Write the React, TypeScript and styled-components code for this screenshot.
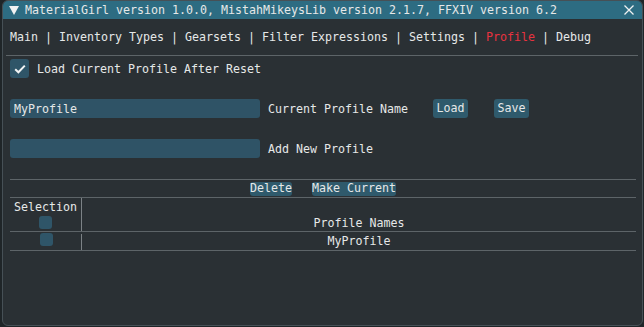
import React, { useState } from 'react';
import styled, { createGlobalStyle } from 'styled-components';

const GlobalStyle = createGlobalStyle`
  html, body {
    margin: 0;
    padding: 0;
    background: #1f2528;
    width: 644px;
    height: 327px;
    overflow: hidden;
  }
`;

const Window = styled.div`
  box-sizing: border-box;
  width: 641px;
  height: 326px;
  margin-left: 2px;
  background: #2a3034;
  border: 1px solid #465056;
  border-radius: 6px;
  overflow: hidden;
  font-family: 'DejaVu Sans Mono', 'Liberation Mono', monospace;
  font-size: 11.63px;
  color: #e6e8e8;
  display: flex;
  flex-direction: column;
`;

const TitleBar = styled.div`
  height: 18px;
  background: #2d6c82;
  display: flex;
  align-items: center;
  padding: 0 8px 0 6px;
  gap: 6px;
`;

const TitleText = styled.span`
  flex: 1;
  white-space: pre;
`;

const Body = styled.div`
  padding: 0 6px 0 7px;
  display: flex;
  flex-direction: column;
`;

const TabBar = styled.div`
  height: 36px;
  display: flex;
  align-items: center;
  white-space: pre;
  border-bottom: 1px solid #5d6468;
  margin: 0 -2px 0 -4px;
  padding-left: 4px;
`;

const Tab = styled.span<{ $active?: boolean }>`
  color: ${(p) => (p.$active ? '#e8323f' : '#e6e8e8')};
`;

const Row = styled.div<{ $top: number }>`
  display: flex;
  align-items: center;
  margin-top: ${(p) => p.$top}px;
  white-space: pre;
`;

const CheckBox = styled.div<{ $size: number }>`
  width: ${(p) => p.$size}px;
  height: ${(p) => p.$size}px;
  background: #2f5568;
  border-radius: 3px;
  display: flex;
  align-items: center;
  justify-content: center;
  flex-shrink: 0;
`;

const MainCheck = styled(CheckBox)`
  margin-right: 8px;
`;

const TextInput = styled.input`
  box-sizing: border-box;
  width: 250px;
  height: 19px;
  background: #2f5366;
  border: none;
  border-radius: 3px;
  color: #e6e8e8;
  font: inherit;
  padding: 0 4px;
  outline: none;
  margin-right: 8px;
`;

const Label = styled.span<{ $w?: number }>`
  width: ${(p) => (p.$w ? `${p.$w}px` : 'auto')};
`;

const Button = styled.button<{ $h?: number; $pad?: number }>`
  height: ${(p) => p.$h ?? 19}px;
  background: #2f5a6c;
  border: none;
  border-radius: 3px;
  color: #e6e8e8;
  font: inherit;
  padding: 0 ${(p) => p.$pad ?? 3.5}px;
  line-height: 1;
`;

const Spacer = styled.span<{ $w: number }>`
  width: ${(p) => p.$w}px;
`;

const Separator = styled.div<{ $top: number }>`
  height: 1px;
  background: #5d6468;
  margin-top: ${(p) => p.$top}px;
`;

const ActionRow = styled.div`
  height: 17px;
  display: flex;
  align-items: center;
  justify-content: center;
  gap: 20px;
`;

const Table = styled.div`
  display: grid;
  grid-template-columns: 72px 1fr;
`;

const HeadSel = styled.div`
  height: 33px;
  border-right: 1px solid #7c8286;
  display: flex;
  flex-direction: column;
  align-items: center;
  padding-top: 2px;
  box-sizing: border-box;
  gap: 2px;
`;

const HeadName = styled.div`
  height: 33px;
  display: flex;
  align-items: flex-end;
  justify-content: center;
  padding-bottom: 1px;
  box-sizing: border-box;
`;

const Line = styled.div`
  grid-column: 1 / 3;
  height: 1px;
  background: #5d6468;
`;

const SelCell = styled.div`
  height: 18px;
  display: flex;
  align-items: flex-start;
  justify-content: center;
  padding-top: 1px;
  box-sizing: border-box;
  position: relative;
  &::after {
    content: '';
    position: absolute;
    right: 0;
    top: 2px;
    bottom: 0;
    width: 1px;
    background: #7c8286;
  }
`;

const NameCell = styled.div`
  height: 18px;
  display: flex;
  align-items: center;
  justify-content: center;
`;

const Check = () => (
  <svg width="12" height="10" viewBox="0 0 12 10">
    <path d="M1.2 5.2 L4.4 8.3 L10.8 1.6" fill="none" stroke="#f2f4f4" strokeWidth="2" />
  </svg>
);

const App: React.FC = () => {
  const [current, setCurrent] = useState('MyProfile');
  const [added, setAdded] = useState('');
  const tabs = ['Main', 'Inventory Types', 'Gearsets', 'Filter Expressions', 'Settings', 'Profile', 'Debug'];

  return (
    <>
      <GlobalStyle />
      <Window>
        <TitleBar>
          <svg width="10" height="9" viewBox="0 0 10 9">
            <path d="M0 0 H10 L5 9 Z" fill="#f0f2f2" />
          </svg>
          <TitleText>MaterialGirl version 1.0.0, MistahMikeysLib version 2.1.7, FFXIV version 6.2</TitleText>
          <svg width="10" height="10" viewBox="0 0 10 10">
            <path d="M0.5 0.5 L9.5 9.5 M9.5 0.5 L0.5 9.5" stroke="#f0f2f2" strokeWidth="1.3" />
          </svg>
        </TitleBar>
        <Body>
          <TabBar>
            {tabs.map((t, i) => (
              <React.Fragment key={t}>
                {i > 0 && ' | '}
                <Tab $active={t === 'Profile'}>{t}</Tab>
              </React.Fragment>
            ))}
          </TabBar>
          <Row $top={3}>
            <MainCheck $size={19}>
              <Check />
            </MainCheck>
            Load Current Profile After Reset
          </Row>
          <Row $top={21}>
            <TextInput value={current} onChange={(e) => setCurrent(e.target.value)} />
            <Label $w={165}>Current Profile Name</Label>
            <Button>Load</Button>
            <Spacer $w={26} />
            <Button>Save</Button>
          </Row>
          <Row $top={21}>
            <TextInput value={added} onChange={(e) => setAdded(e.target.value)} />
            <Label>Add New Profile</Label>
          </Row>
          <Separator $top={21} />
          <ActionRow>
            <Button $h={14} $pad={0}>Delete</Button>
            <Button $h={14} $pad={0}>Make Current</Button>
          </ActionRow>
          <Separator $top={0} />
          <Table>
            <HeadSel>
              Selection
              <CheckBox $size={13} />
            </HeadSel>
            <HeadName>Profile Names</HeadName>
            <Line />
            <SelCell>
              <CheckBox $size={13} />
            </SelCell>
            <NameCell>MyProfile</NameCell>
            <Line />
          </Table>
        </Body>
      </Window>
    </>
  );
};

export default App;
